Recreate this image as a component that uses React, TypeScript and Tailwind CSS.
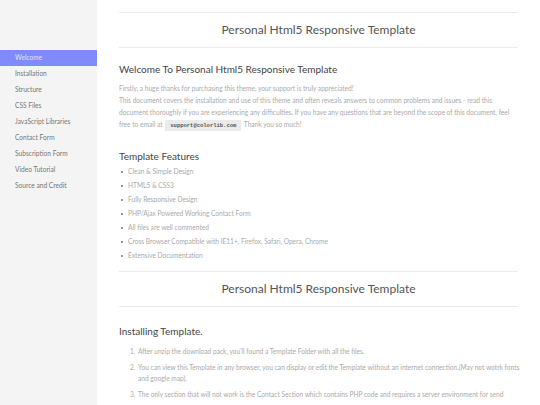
import React from "react";

const nav = [
  "Welcome",
  "Installation",
  "Structure",
  "CSS Files",
  "JavaScript Libraries",
  "Contact Form",
  "Subscription Form",
  "Video Tutorial",
  "Source and Credit",
];

const features = [
  "Clean & Simple Design",
  "HTML5 & CSS3",
  "Fully Responsive Design",
  "PHP/Ajax Powered Working Contact Form",
  "All files are well commented",
  "Cross Browser Compatible with IE11+, Firefox, Safari, Opera, Chrome",
  "Extensive Documentation",
];

function TitleBar({ className = "" }: { className?: string }) {
  return (
    <div
      className={`h-[36px] border-t border-b border-[#ebebeb] flex items-center justify-center text-[12px] text-[#555] ${className}`}
    >
      Personal Html5 Responsive Template
    </div>
  );
}

export default function App() {
  return (
    <div
      className="flex w-[540px] h-[405px] overflow-hidden bg-white"
      style={{ fontFamily: "Lato, 'Open Sans', sans-serif" }}
    >
      <aside className="w-[97px] shrink-0 bg-[#f4f4f4] pt-[50px]">
        {nav.map((n, i) => (
          <div
            key={n}
            className={`h-[16px] flex items-center pl-[15px] text-[6.6px] ${
              i === 0 ? "bg-[#7f8bfb] text-[#dfe2ff]" : "text-[#777]"
            }`}
          >
            {n}
          </div>
        ))}
      </aside>
      <main className="flex-1 min-w-0 px-[22px] pt-[12px]">
        <TitleBar />
        <h2 className="mt-[14px] text-[10px] leading-[14px] text-[#444]">
          Welcome To Personal Html5 Responsive Template
        </h2>
        <p className="mt-[6px] text-[6.6px] leading-[12px] text-[#aaa] whitespace-nowrap">
          Firstly, a huge thanks for purchasing this theme, your support is truly appreciated!
          <br />
          This document covers the installation and use of this theme and often reveals answers to
          common problems and issues - read this
          <br />
          document thoroughly if you are experiencing any difficulties. If you have any questions
          that are beyond the scope of this document, feel
          <br />
          free to email at{" "}
          <code
            className="bg-[#ebebeb] text-[#555] font-bold text-[5.5px] px-[5px] py-[2px] mx-[1px]"
            style={{ fontFamily: "'Liberation Mono', monospace" }}
          >
            support@colorlib.com
          </code>{" "}
          Thank you so much!
        </p>
        <h2 className="mt-[17px] text-[10px] leading-[14px] text-[#444]">Template Features</h2>
        <ul className="mt-[2px]">
          {features.map((f) => (
            <li key={f} className="flex items-center h-[14px] text-[6.6px] text-[#aaa]">
              <span className="w-[2px] h-[2px] bg-[#999] ml-[2px] mr-[5px]" />
              {f}
            </li>
          ))}
        </ul>
        <TitleBar className="mt-[8px]" />
        <h2 className="mt-[17px] text-[10px] leading-[14px] text-[#444]">Installing Template.</h2>
        <ol className="mt-[8px] pl-[11px] text-[6.6px] leading-[11px] text-[#aaa] whitespace-nowrap">
          <li className="flex mb-[5px]">
            <span className="w-[8px] shrink-0">1.</span>
            <span>After unzip the download pack, you'll found a Template Folder with all the files.</span>
          </li>
          <li className="flex mb-[5px]">
            <span className="w-[8px] shrink-0">2.</span>
            <span>
              You can view this Template in any browser, you can display or edit the Template without
              an internet connection.(May not wotrk fonts
              <br />
              and google map).
            </span>
          </li>
          <li className="flex">
            <span className="w-[8px] shrink-0">3.</span>
            <span>
              The only section that will not work is the Contact Section which contains PHP code and
              requires a server environment for send
            </span>
          </li>
        </ol>
      </main>
    </div>
  );
}
